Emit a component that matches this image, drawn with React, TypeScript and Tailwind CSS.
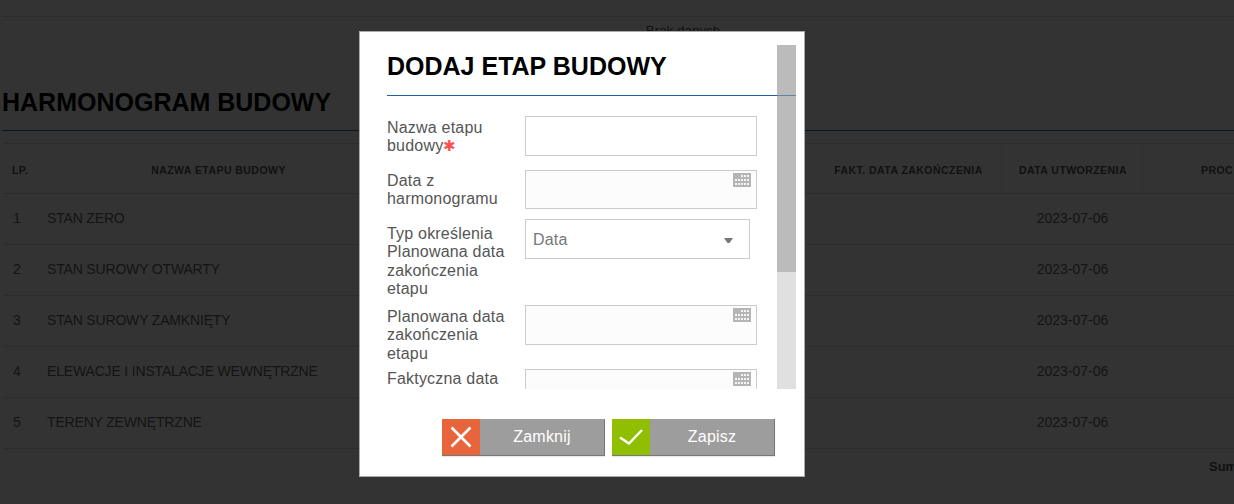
const rows = [
  ["1", "STAN ZERO"],
  ["2", "STAN SUROWY OTWARTY"],
  ["3", "STAN SUROWY ZAMKNIĘTY"],
  ["4", "ELEWACJE I INSTALACJE WEWNĘTRZNE"],
  ["5", "TERENY ZEWNĘTRZNE"],
];

const cols = "grid grid-cols-[33px_365px_413px_187px_142px_94px]";

function CalendarIcon() {
  return (
    <svg width="18" height="14" viewBox="0 0 18 14" className="absolute right-[5px] top-[2px]">
      <rect width="18" height="14" fill="#b5b5b5" />
      {[0, 1, 2].map((r) =>
        [0, 1, 2, 3, 4].map((c) =>
          r === 0 && c < 2 ? null : (
            <rect key={`${r}-${c}`} x={2 + c * 3} y={2 + r * 4} width="2" height="2" fill="#f4f4f4" />
          ),
        ),
      )}
    </svg>
  );
}

function Btn({ label, color, icon }: { label: string; color: string; icon: React.ReactNode }) {
  return (
    <div className="flex h-[37px] w-[163px] border-r border-b border-[#777777] bg-[#9d9d9d] shadow-[0_1px_1px_#e8e8e8]">
      <div className={`flex w-[38px] items-center justify-center ${color}`}>{icon}</div>
      <div className="flex flex-1 items-center justify-center text-[16px] tracking-[0.2px] text-white">{label}</div>
    </div>
  );
}

export default function App() {
  return (
    <div className="relative h-[504px] w-[1234px] overflow-hidden bg-white font-['Liberation_Sans',Arial,sans-serif]">
      {/* Page under the backdrop */}
      <div className="ml-[2px] h-[17px] border-b border-[#dddddd]" />
      <div className="flex h-[15px] items-center justify-center pt-[14px] pl-[132px] text-[13.4px] text-[#555555]">Brak danych</div>
      <div className="mt-[53px] ml-[2px] flex h-[36px] items-center text-[25px] font-bold text-black">HARMONOGRAM BUDOWY</div>
      <div className="mt-[9px] ml-[2px] h-px bg-[#2a6fb5]" />
      <div className="mt-[12px] ml-[3px]">
        <div className={`${cols} h-[51px] items-center border-y border-[#dddddd] pt-[4px] text-[10.5px] font-bold tracking-[0.45px] text-[#555555]`}>
          <div className="pl-[9px]">LP.</div>
          <div className="text-center">NAZWA ETAPU BUDOWY</div>
          <div />
          <div className="pl-[2px] text-center">FAKT. DATA ZAKOŃCZENIA</div>
          <div className="-mt-[4px] flex h-[calc(100%+4px)] items-center justify-center border-x border-[#f0f0f0] pt-[4px] pl-[2px]">DATA UTWORZENIA</div>
          <div className="pl-[58px] whitespace-nowrap">PROC</div>
        </div>
        {rows.map(([n, name]) => (
          <div key={n} className={`${cols} h-[51px] items-center border-b border-[#dddddd] pb-[1px] text-[14px] text-[#666666]`}>
            <div className="pl-[10px]">{n}</div>
            <div className="pl-[11px] tracking-[-0.17px] whitespace-nowrap">{name}</div>
            <div />
            <div />
            <div className="pl-[1px] text-center">2023-07-06</div>
            <div />
          </div>
        ))}
        <div className="mt-[8px] pl-[1206px] text-[13px] font-bold whitespace-nowrap text-[#555555]">Sum</div>
      </div>

      {/* Backdrop and dialog */}
      <div className="absolute inset-0 bg-black/80">
        <div className="absolute top-[31px] left-[359px] flex h-[446px] w-[446px] flex-col border border-[#aaaaaa] bg-white">
          <div className="relative mt-[13px] flex h-[344px]">
            <div className="absolute top-[50px] right-[8px] left-[27px] h-px bg-[#1f5f9f]/60" />
            <div className="absolute top-[50px] left-[27px] h-px w-[390px] bg-[#1f5f9f]" />
            <div className="flex-1 overflow-hidden pl-[27px]">
              <div className="flex h-[42px] items-center text-[25px] leading-none font-bold text-black">DODAJ ETAP BUDOWY</div>
              <div className="mt-[29px] text-[16px] leading-[18.4px] tracking-[0.2px] text-[#555555]">
                <div className="flex h-[54px]">
                  <div className="w-[138px] shrink-0 pt-[3px]">Nazwa etapu<br />budowy<span className="text-[15px] leading-none text-[#ff5050]">✱</span></div>
                  <div className="h-[40px] w-[232px] shrink-0 border border-[#cccccc] bg-white" />
                </div>
                <div className="flex h-[49px]">
                  <div className="w-[138px] shrink-0 pt-[2px]">Data z<br />harmonogramu</div>
                  <div className="relative h-[39px] w-[232px] shrink-0 border border-[#cccccc] bg-[#fcfcfc]"><CalendarIcon /></div>
                </div>
                <div className="flex h-[86px]">
                  <div className="w-[138px] shrink-0 pt-[6px]">Typ określenia<br />Planowana data<br />zakończenia<br />etapu</div>
                  <div className="flex h-[40px] w-[225px] shrink-0 items-center justify-between border border-[#cccccc] bg-white pt-[2px] pr-[16px] pl-[7px] text-[#777777]">
                    Data
                    <svg width="9" height="5" viewBox="0 0 9 5"><path d="M0 0H9L5.5 5H3.5Z" fill="#777777" /></svg>
                  </div>
                </div>
                <div className="flex h-[64px]">
                  <div className="w-[138px] shrink-0 pt-[3px]">Planowana data<br />zakończenia<br />etapu</div>
                  <div className="relative h-[40px] w-[232px] shrink-0 border border-[#cccccc] bg-[#fcfcfc]"><CalendarIcon /></div>
                </div>
                <div className="flex h-[64px]">
                  <div className="w-[138px] shrink-0 pt-[1px]">Faktyczna data<br />zakończenia</div>
                  <div className="relative h-[40px] w-[232px] shrink-0 border border-[#cccccc] bg-[#fcfcfc]"><CalendarIcon /></div>
                </div>
              </div>
            </div>
            <div className="mr-[8px] flex w-[19px] shrink-0 flex-col bg-[#e0e0e0]">
              <div className="h-[227px] bg-[#bbbbbb]" />
            </div>
          </div>
          <div className="mt-[30px] flex gap-[7px] pl-[82px]">
            <Btn
              label="Zamknij"
              color="bg-[#e8643a]"
              icon={
                <svg width="22" height="22" viewBox="0 0 22 22"><path d="M1.5 1.5L20.5 20.5M20.5 1.5L1.5 20.5" stroke="#ffffff" strokeWidth="2.6" fill="none" /></svg>
              }
            />
            <Btn
              label="Zapisz"
              color="bg-[#8fbf00]"
              icon={
                <svg width="24" height="16" viewBox="0 0 24 16"><path d="M1 8.5L10 14.5L23 1" stroke="#ffffff" strokeWidth="2.4" fill="none" /></svg>
              }
            />
          </div>
        </div>
      </div>
    </div>
  );
}
